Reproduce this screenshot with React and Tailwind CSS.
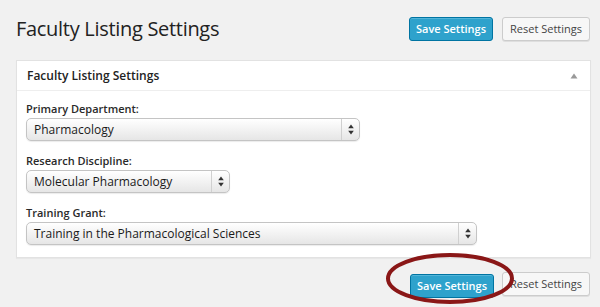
import React from 'react';

const FONT = "font-['Open_Sans','Liberation_Sans',sans-serif]";

// Select de estilo Mac (gradiente + setas)
function MacSelect({ value, width }) {
  return (
    <div
      className={`flex h-[23px] items-stretch rounded-[5px] border border-[#c4c4c4] bg-gradient-to-b from-white to-[#e6e6e6] shadow-[0_1px_1px_rgba(0,0,0,0.08)] ${width}`}
    >
      <div className="flex flex-1 items-center pl-[7px] text-[12px] text-[#1a1a1a]">{value}</div>
      <div className="flex w-[18px] items-center justify-center border-l border-[#d0d0d0]">
        <svg width="6" height="11" viewBox="0 0 6 11">
          <path d="M3 0.5 L5.8 4.2 L0.2 4.2 Z" fill="#333" />
          <path d="M3 10.5 L5.8 6.8 L0.2 6.8 Z" fill="#333" />
        </svg>
      </div>
    </div>
  );
}

function SaveButton() {
  return (
    <button className="h-[24px] w-[84px] rounded-[3px] border border-[#0074a2] bg-[#2ea2cc] text-[11px] font-semibold text-white shadow-[inset_0_1px_0_rgba(120,200,230,0.5)]">
      Save Settings
    </button>
  );
}

function ResetButton() {
  return (
    <button className="h-[24px] w-[88px] rounded-[3px] border border-[#cccccc] bg-[#f7f7f7] text-[11px] text-[#444] shadow-[0_1px_0_rgba(0,0,0,0.08)]">
      Reset Settings
    </button>
  );
}

export default function App() {
  return (
    <div className={`h-[307px] w-[600px] overflow-hidden bg-[#f1f1f1] pl-4 pr-[10px] pt-[17px] ${FONT}`}>
      <div className="flex h-[24px] items-center justify-between">
        <h1 className="text-[20px] leading-[24px] tracking-[-0.3px] text-[#222]">Faculty Listing Settings</h1>
        <div className="flex gap-[9px]">
          <SaveButton />
          <ResetButton />
        </div>
      </div>

      <div className="mt-[19px] w-[575px] border border-[#e2e2e2] bg-white shadow-[0_1px_1px_rgba(0,0,0,0.04)]">
        <div className="flex h-[30px] items-center justify-between border-b border-[#eeeeee] pl-[10px] pr-[12px]">
          <span className="text-[12px] font-semibold text-[#222]">Faculty Listing Settings</span>
          <svg width="8" height="6" viewBox="0 0 8 6">
            <path d="M4 0.5 L7.5 5.5 L0.5 5.5 Z" fill="#999" />
          </svg>
        </div>
        <div className="flex flex-col gap-[13px] px-[9px] pb-[12px] pt-[11px]">
          <div>
            <div className="mb-[2px] text-[11px] font-semibold leading-[14px] text-[#2a2a2a]">Primary Department:</div>
            <MacSelect value="Pharmacology" width="w-[334px]" />
          </div>
          <div>
            <div className="mb-[2px] text-[11px] font-semibold leading-[14px] text-[#2a2a2a]">Research Discipline:</div>
            <MacSelect value="Molecular Pharmacology" width="w-[204px]" />
          </div>
          <div>
            <div className="mb-[2px] text-[11px] font-semibold leading-[14px] text-[#2a2a2a]">Training Grant:</div>
            <MacSelect value="Training in the Pharmacological Sciences" width="w-[451px]" />
          </div>
        </div>
      </div>

      <div className="mt-[14px] flex justify-end gap-[8px]">
        <div className="relative">
          <SaveButton />
          {/* destaque em vermelho */}
          <svg
            className="pointer-events-none absolute left-[-25px] top-[-19px] z-10"
            width="130"
            height="52"
            viewBox="0 0 130 52"
          >
            <ellipse cx="65" cy="25.5" rx="62" ry="23.5" fill="none" stroke="#8a1717" strokeWidth="4" />
          </svg>
        </div>
        <ResetButton />
      </div>
    </div>
  );
}
